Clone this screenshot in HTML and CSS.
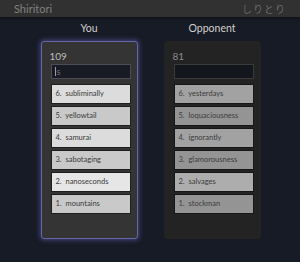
FILE: index.html
```html
<!DOCTYPE html>
<html lang="en">

<head>
    <meta charset="UTF-8">
    <meta name="viewport" content="width=device-width, initial-scale=1.0">
    <title>Shiritori</title>
    <link rel="stylesheet" href="styles.css">
</head>

<body>
    <header class="topbar">
        <span class="brand">Shiritori</span>
        <span class="brand-jp">しりとり</span>
    </header>

    <main class="board">
        <section class="player">
            <h2 class="player-name">You</h2>
            <div class="panel active">
                <div class="score">109</div>
                <div class="word-input"><span class="caret"></span>s</div>
                <ul class="words">
                    <li>6.&nbsp; subliminally</li>
                    <li class="shade">5.&nbsp; yellowtail</li>
                    <li>4.&nbsp; samurai</li>
                    <li class="shade">3.&nbsp; sabotaging</li>
                    <li class="light">2.&nbsp; nanoseconds</li>
                    <li class="shade">1.&nbsp; mountains</li>
                </ul>
            </div>
        </section>

        <section class="player">
            <h2 class="player-name">Opponent</h2>
            <div class="panel waiting">
                <div class="score">81</div>
                <div class="word-input"></div>
                <ul class="words">
                    <li>6.&nbsp; yesterdays</li>
                    <li class="shade">5.&nbsp; loquaciousness</li>
                    <li>4.&nbsp; ignorantly</li>
                    <li class="shade">3.&nbsp; glamorousness</li>
                    <li class="light">2.&nbsp; salvages</li>
                    <li class="shade">1.&nbsp; stockman</li>
                </ul>
            </div>
        </section>
    </main>
</body>

</html>
```

FILE: styles.css
```css
/* General Styles */
body {
    font-family: 'Lato', 'Noto Sans CJK JP', sans-serif;
    background-color: #171b25;
    margin: 0;
    padding: 0;
    height: 262px;
    overflow: hidden;
}

/* Top Bar */
.topbar {
    display: flex;
    justify-content: space-between;
    align-items: center;
    height: 17px;
    padding: 0 14px;
    background-color: #313131;
    box-shadow: 0 1px 3px rgba(0, 0, 0, 0.5);
}

.brand {
    color: #808080;
    font-size: 11px;
}

.brand-jp {
    color: #858585;
    font-size: 10px;
    font-weight: 300;
    letter-spacing: 1px;
}

/* Board */
.board {
    display: flex;
    justify-content: center;
    gap: 26px;
    padding-left: 1px;
}

.player {
    width: 97px;
}

.player-name {
    margin: 4px 0 0;
    height: 20px;
    line-height: 15px;
    text-align: center;
    font-weight: normal;
    font-size: 10.5px;
    color: #cfcfcf;
}

/* Panels */
.panel {
    box-sizing: border-box;
    height: 198px;
    padding: 8px 8px 0;
    border-radius: 3px;
}

.panel.active {
    background-color: #343434;
    border: 1px solid #6565a8;
    box-shadow: 0 0 5px 1px rgba(110, 110, 200, 0.55);
}

.panel.waiting {
    background-color: #232323;
    border: 1px solid #232323;
}

.score {
    font-size: 10px;
    line-height: 12px;
    height: 14px;
    color: #bdbdbd;
}

.waiting .score {
    color: #8a8a8a;
}

.word-input {
    box-sizing: border-box;
    display: flex;
    align-items: center;
    height: 15px;
    margin: 0 0 5px 1px;
    width: 80px;
    padding-left: 3px;
    background-color: #181b24;
    border: 1px solid #4c4c58;
    font-size: 9px;
    color: #707070;
}

.waiting .word-input {
    background-color: #13161d;
    border-color: #3a3a3a;
}

.caret {
    display: inline-block;
    width: 1px;
    height: 9px;
    margin-right: 1px;
    background-color: #9a9a9a;
}

/* Word List */
.words {
    list-style: none;
    padding: 0;
    margin: 0 0 0 1px;
    display: flex;
    flex-direction: column;
    gap: 2px;
}

.words li {
    box-sizing: border-box;
    width: 80px;
    height: 20px;
    line-height: 18px;
    padding-left: 4px;
    font-size: 7.5px;
    color: #3a3a3a;
    background-color: #dcdcdc;
    border: 1px solid #1e1e1e;
    white-space: nowrap;
    overflow: hidden;
}

.words li.shade {
    background-color: #c9c9c9;
}

.words li.light {
    background-color: #e6e6e6;
}

.waiting .words li {
    background-color: #a2a2a2;
    color: #3c3c3c;
    border-color: #161616;
}

.waiting .words li.shade {
    background-color: #949494;
}

.waiting .words li.light {
    background-color: #adadad;
}
```
